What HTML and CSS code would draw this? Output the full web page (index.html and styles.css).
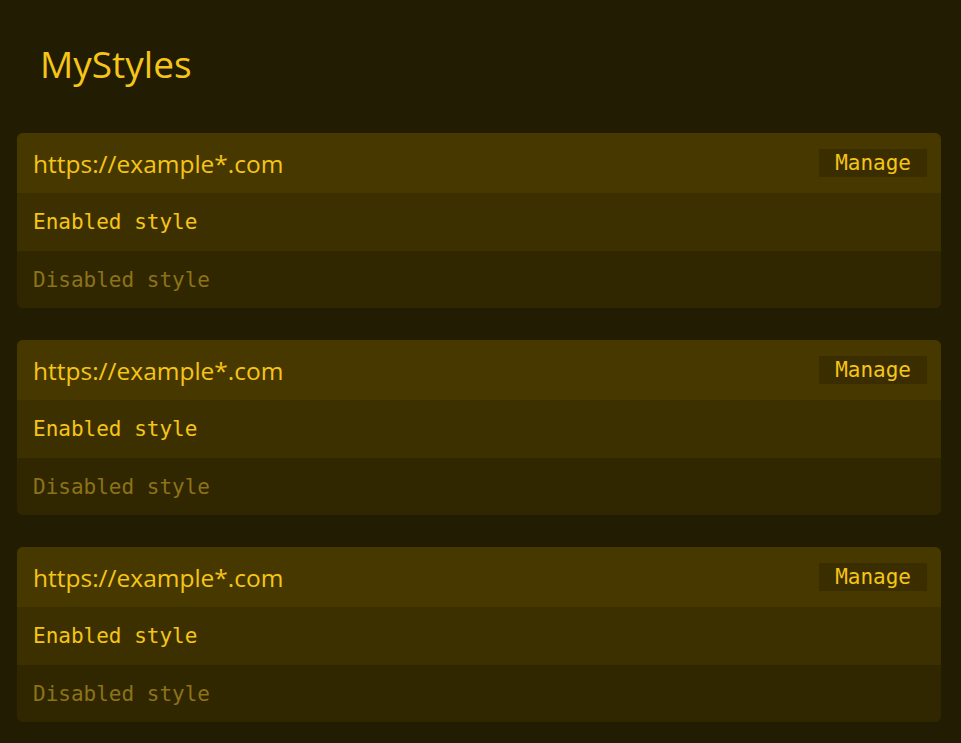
FILE: index.html
```html
<!DOCTYPE html>
<html lang="en">
<head>
  <meta charset="UTF-8">
  <title>MyStyles</title>
  <link rel="stylesheet" href="styles.css">
</head>
<body>
  <h1 class="title">MyStyles</h1>

  <div class="list">
    <div class="site">
      <div class="site-head">
        <span class="site-url">https://example*.com</span>
        <button class="manage">Manage</button>
      </div>
      <div class="style on">Enabled style</div>
      <div class="style off">Disabled style</div>
    </div>

    <div class="site">
      <div class="site-head">
        <span class="site-url">https://example*.com</span>
        <button class="manage">Manage</button>
      </div>
      <div class="style on">Enabled style</div>
      <div class="style off">Disabled style</div>
    </div>

    <div class="site">
      <div class="site-head">
        <span class="site-url">https://example*.com</span>
        <button class="manage">Manage</button>
      </div>
      <div class="style on">Enabled style</div>
      <div class="style off">Disabled style</div>
    </div>
  </div>
</body>
</html>
```

FILE: styles.css
```css
body {
  margin: 0;
  padding: 0 20px 0 17px;
  background: #221c02;
  color: #f5c518;
  font-family: "Open Sans", sans-serif;
}
.title {
  margin: 0;
  padding: 37px 0 42px 23px;
  font-size: 37px;
  font-weight: 400;
  line-height: 54px;
}
.list {
  display: flex;
  flex-direction: column;
  gap: 32px;
}
.site {
  border-radius: 6px;
  overflow: hidden;
  background: #302600;
}
.site-head {
  display: flex;
  align-items: center;
  justify-content: space-between;
  height: 60px;
  padding: 0 14px 0 16px;
  background: #473800;
}
.site-url {
  font-size: 24.5px;
}
.manage {
  height: 28px;
  padding: 0 16px;
  background: #3a2e00;
  color: #f5c518;
  border: none;
  font-family: "DejaVu Sans Mono", monospace;
  font-size: 21px;
  cursor: pointer;
}
.style {
  height: 58px;
  display: flex;
  align-items: center;
  padding-left: 16px;
  font-family: "DejaVu Sans Mono", monospace;
  font-size: 21px;
}
.style.on {
  background: #3d3000;
}
.style.off {
  height: 57px;
  background: #302600;
  color: #8c7318;
}
```
